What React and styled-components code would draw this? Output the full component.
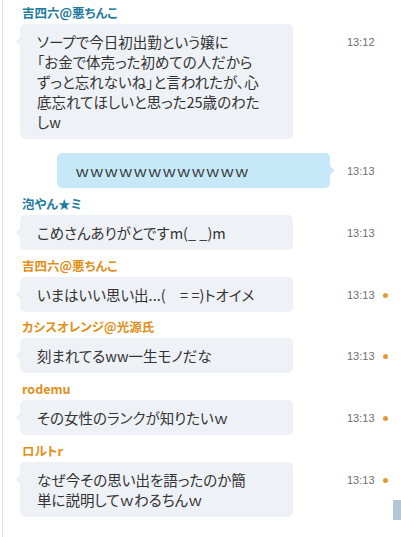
import React from 'react';
import styled, {createGlobalStyle} from 'styled-components';

const Global=createGlobalStyle`
    html,body{
        margin:0;
        padding:0;
        background:#fff;
    }
`

const Page=styled.div`
    position:relative;
    width:401px;
    height:537px;
    overflow:hidden;
    background:#fff;
    padding-left:2px;
    box-sizing:border-box;
    font-family:"Noto Sans CJK JP","Noto Sans",sans-serif;
`
const Log=styled.div`
    height:100%;
    border-left:1px solid #d6e6f1;
    padding:3px 0 0 17px;
    display:flex;
    flex-direction:column;
`
const Group=styled.div`
    display:flex;
    flex-direction:column;
    margin-top:${props=>props.gap||0}px;
`
const Name=styled.div`
    height:20px;
    line-height:20px;
    margin-left:2px;
    margin-bottom:1px;
    font-size:12.5px;
    font-weight:700;
    font-feature-settings:"palt";
    color:${props=>props.color||'#1f7ba0'};
`
const Row=styled.div`
    display:flex;
    align-items:flex-start;
`
const BubbleCol=styled.div`
    width:310px;
    display:flex;
    justify-content:${props=>props.mine?'flex-end':'flex-start'};
`
const Bubble=styled.div`
    position:relative;
    width:273px;
    box-sizing:border-box;
    padding:8px 10px 7px ${props=>props.mine?18:17}px;
    border-radius:5px;
    background:${props=>props.mine?'#c6e8f8':'#eef1f6'};
    color:#333;
    font-size:14.5px;
    line-height:20px;
    font-feature-settings:"palt";
    &::before{
        content:'';
        position:absolute;
        top:14px;
        ${props=>props.mine?'right:-3px;':'left:-3px;'}
        width:7px;
        height:7px;
        border-radius:1px;
        background:inherit;
        transform:rotate(45deg);
    }
`
const Time=styled.div`
    margin-left:17px;
    padding-top:8px;
    display:flex;
    align-items:center;
    height:20px;
    font-family:"Liberation Sans",Arial,sans-serif;
    font-size:11px;
    color:#6e6e6e;
`
const Dot=styled.span`
    width:5px;
    height:5px;
    margin-left:8px;
    border-radius:50%;
    background:#e39a36;
`
const Thumb=styled.div`
    position:absolute;
    right:0;
    top:500px;
    width:8px;
    height:20px;
    background:#b3c6d8;
`

const BLUE='#1f7ba0';
const ORANGE='#e0901a';

const messages=[
    {name:'吉四六@悪ちんこ',color:BLUE,time:'13:12',lines:['ソープで今日初出勤という嬢に','「お金で体売った初めての人だから','ずっと忘れないね」と言われたが、心','底忘れてほしいと思った25歳のわた','しw']},
    {mine:true,time:'13:13',gap:14,lines:['ｗｗｗｗｗｗｗｗｗｗｗｗ']},
    {name:'泡やん★ミ',color:BLUE,time:'13:13',gap:6,lines:['こめさんありがとですm(_ _)m']},
    {name:'吉四六@悪ちんこ',color:ORANGE,time:'13:13',gap:6,unread:true,lines:['いまはいい思い出...(　= =)トオイメ']},
    {name:'カシスオレンジ@光源氏',color:ORANGE,time:'13:13',gap:5,unread:true,lines:['刻まれてるww一生モノだな']},
    {name:'rodemu',color:ORANGE,time:'13:13',gap:6,unread:true,lines:['その女性のランクが知りたいｗ']},
    {name:'ロルトr',color:ORANGE,time:'13:13',gap:6,unread:true,lines:['なぜ今その思い出を語ったのか簡','単に説明してｗわるちんｗ']},
];

export default function App(){
    return(
        <Page>
            <Global/>
            <Log>
                {messages.map((m,i)=>(
                    <Group key={i} gap={m.gap}>
                        {m.name && <Name color={m.color}>{m.name}</Name>}
                        <Row>
                            <BubbleCol mine={m.mine}>
                                <Bubble mine={m.mine}>
                                    {m.lines.map((l,j)=><div key={j}>{l}</div>)}
                                </Bubble>
                            </BubbleCol>
                            <Time>{m.time}{m.unread && <Dot/>}</Time>
                        </Row>
                    </Group>
                ))}
            </Log>
            <Thumb/>
        </Page>
    );
}
